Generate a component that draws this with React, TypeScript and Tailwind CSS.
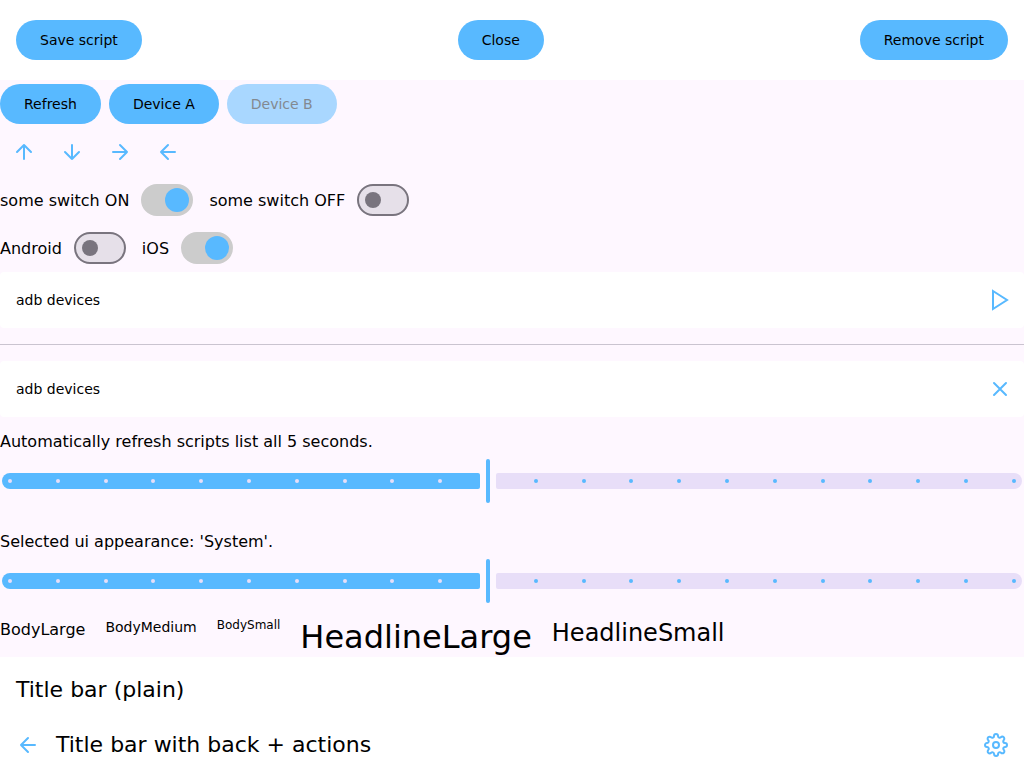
import { useId, useState, type ButtonHTMLAttributes, type ReactNode } from "react";

type IconProps = { join?: "round" | "miter"; children: ReactNode };

function Icon({ join = "round", children }: IconProps) {
  return (
    <svg
      className="size-6 shrink-0"
      viewBox="0 0 24 24"
      fill="none"
      stroke="currentColor"
      strokeWidth="2"
      strokeLinejoin={join}
      strokeLinecap="round"
      aria-hidden="true"
    >
      {children}
    </svg>
  );
}

const ArrowUp = () => (
  <Icon>
    <path d="M12 19V5M5 12l7-7 7 7" />
  </Icon>
);
const ArrowDown = () => (
  <Icon>
    <path d="M12 5v14M19 12l-7 7-7-7" />
  </Icon>
);
const ArrowRight = () => (
  <Icon>
    <path d="M5 12h14M12 5l7 7-7 7" />
  </Icon>
);
const ArrowLeft = () => (
  <Icon>
    <path d="M19 12H5M12 19l-7-7 7-7" />
  </Icon>
);
const Play = () => (
  <Icon join="miter">
    <path d="M5 3l14 9-14 9V3z" />
  </Icon>
);
const Cross = () => (
  <Icon>
    <path d="M18 6L6 18M6 6l12 12" />
  </Icon>
);
const Settings = () => (
  <Icon>
    <circle cx="12" cy="12" r="3" />
    <path d="M19.4 15a1.65 1.65 0 0 0 .33 1.82l.06.06a2 2 0 0 1 0 2.83 2 2 0 0 1-2.83 0l-.06-.06a1.65 1.65 0 0 0-1.82-.33 1.65 1.65 0 0 0-1 1.51V21a2 2 0 0 1-2 2 2 2 0 0 1-2-2v-.09A1.65 1.65 0 0 0 9 19.4a1.65 1.65 0 0 0-1.82.33l-.06.06a2 2 0 0 1-2.83 0 2 2 0 0 1 0-2.83l.06-.06a1.65 1.65 0 0 0 .33-1.82 1.65 1.65 0 0 0-1.51-1H3a2 2 0 0 1-2-2 2 2 0 0 1 2-2h.09A1.65 1.65 0 0 0 4.6 9a1.65 1.65 0 0 0-.33-1.82l-.06-.06a2 2 0 0 1 0-2.83 2 2 0 0 1 2.83 0l.06.06a1.65 1.65 0 0 0 1.82.33H9a1.65 1.65 0 0 0 1-1.51V3a2 2 0 0 1 2-2 2 2 0 0 1 2 2v.09a1.65 1.65 0 0 0 1 1.51 1.65 1.65 0 0 0 1.82-.33l.06-.06a2 2 0 0 1 2.83 0 2 2 0 0 1 0 2.83l-.06.06a1.65 1.65 0 0 0-.33 1.82V9a1.65 1.65 0 0 0 1.51 1H21a2 2 0 0 1 2 2 2 2 0 0 1-2 2h-.09a1.65 1.65 0 0 0-1.51 1z" />
  </Icon>
);

function PillButton(props: ButtonHTMLAttributes<HTMLButtonElement>) {
  return (
    <button
      type="button"
      className="h-10 rounded-full bg-[#58b9ff] px-6 text-sm text-black disabled:bg-[#a9d7ff] disabled:text-[#838990]"
      {...props}
    />
  );
}

function IconButton({ label, children }: { label: string; children: ReactNode }) {
  return (
    <button type="button" aria-label={label} className="grid size-12 place-items-center text-[#58b9ff]">
      {children}
    </button>
  );
}

function Switch({ label, initial = false }: { label: string; initial?: boolean }) {
  const id = useId();
  const [on, setOn] = useState(initial);
  return (
    <div className="flex h-12 items-center gap-3">
      <label htmlFor={id} className="leading-[25px]">
        {label}
      </label>
      <input
        id={id}
        type="checkbox"
        role="switch"
        checked={on}
        onChange={(e) => setOn(e.target.checked)}
        className="flex h-8 w-13 appearance-none items-center rounded-full border-2 border-[#79747e] bg-[#e6e0e9] px-1.5 before:size-4 before:rounded-full before:bg-[#79747e] checked:justify-end checked:border-[#cccccc] checked:bg-[#cccccc] checked:px-0.5 checked:before:size-6 checked:before:bg-[#58b9ff]"
      />
    </div>
  );
}

const STEPS = 21;

function Slider({ label }: { label: string }) {
  const [value, setValue] = useState(10);
  const id = useId();
  return (
    <div className="flex flex-col gap-[5px]">
      <label htmlFor={id} className="self-start leading-[25px]">
        {label}
      </label>
      <div className="relative mx-0.5 flex h-11 items-center gap-1.5">
        <span
          className="h-4 shrink-0 rounded-l-lg rounded-r-xs bg-[#58b9ff]"
          style={{ width: `calc((100% - 16px) * ${value / STEPS})` }}
        />
        <span className="h-11 w-1 shrink-0 rounded-full bg-[#58b9ff]" />
        <span className="h-4 grow rounded-l-xs rounded-r-lg bg-[#e8def8]" />
        <div className="absolute inset-x-1.5 flex justify-between">
          {Array.from({ length: STEPS + 1 }, (_, i) => (
            <span
              key={i}
              className={`size-1 rounded-full ${i < value ? "bg-[#e8def8]" : i > value ? "bg-[#58b9ff]" : ""}`}
            />
          ))}
        </div>
        <input
          id={id}
          type="range"
          min={0}
          max={STEPS}
          value={value}
          onChange={(e) => setValue(Number(e.target.value))}
          className="absolute inset-0 size-full cursor-pointer opacity-0"
        />
      </div>
    </div>
  );
}

function ScriptRow({ action, children }: { action: string; children: ReactNode }) {
  return (
    <div className="flex h-14 items-center justify-between rounded-sm bg-white pl-4 text-sm">
      <span>adb devices</span>
      <IconButton label={action}>{children}</IconButton>
    </div>
  );
}

export default function App() {
  return (
    <main className="flex min-h-screen flex-col bg-[#fef7ff] font-['DejaVu_Sans',sans-serif] text-base text-black">
      <header className="flex h-20 items-center justify-between bg-white px-4">
        <PillButton>Save script</PillButton>
        <PillButton>Close</PillButton>
        <PillButton>Remove script</PillButton>
      </header>

      <div className="flex gap-2 py-1">
        <PillButton>Refresh</PillButton>
        <PillButton>Device A</PillButton>
        <PillButton disabled>Device B</PillButton>
      </div>

      <div className="flex">
        <IconButton label="Up">
          <ArrowUp />
        </IconButton>
        <IconButton label="Down">
          <ArrowDown />
        </IconButton>
        <IconButton label="Right">
          <ArrowRight />
        </IconButton>
        <IconButton label="Left">
          <ArrowLeft />
        </IconButton>
      </div>

      <div className="flex gap-4">
        <Switch label="some switch ON" initial />
        <Switch label="some switch OFF" />
      </div>
      <div className="flex gap-4">
        <Switch label="Android" />
        <Switch label="iOS" initial />
      </div>

      <ScriptRow action="Run">
        <Play />
      </ScriptRow>
      <hr className="my-4 border-[#cac4d0]" />
      <ScriptRow action="Stop">
        <Cross />
      </ScriptRow>

      <div className="flex flex-col gap-6.5 pt-3 pb-3.5">
        <Slider label="Automatically refresh scripts list all 5 seconds." />
        <Slider label="Selected ui appearance: 'System'." />
      </div>

      <div className="flex items-start gap-5">
        <span className="text-base leading-[25px]">BodyLarge</span>
        <span className="text-sm">BodyMedium</span>
        <span className="text-xs">BodySmall</span>
        <span className="text-[32px] leading-10">HeadlineLarge</span>
        <span className="text-2xl">HeadlineSmall</span>
      </div>

      <h1 className="flex h-16 items-center bg-white px-4 text-[22px] leading-[33px]">Title bar (plain)</h1>
      <div className="flex min-h-11 grow items-center bg-white px-4">
        <button type="button" aria-label="Back" className="mr-4 text-[#58b9ff]">
          <ArrowLeft />
        </button>
        <h2 className="grow text-[22px] leading-[33px]">Title bar with back + actions</h2>
        <button type="button" aria-label="Settings" className="text-[#58b9ff]">
          <Settings />
        </button>
      </div>
    </main>
  );
}
